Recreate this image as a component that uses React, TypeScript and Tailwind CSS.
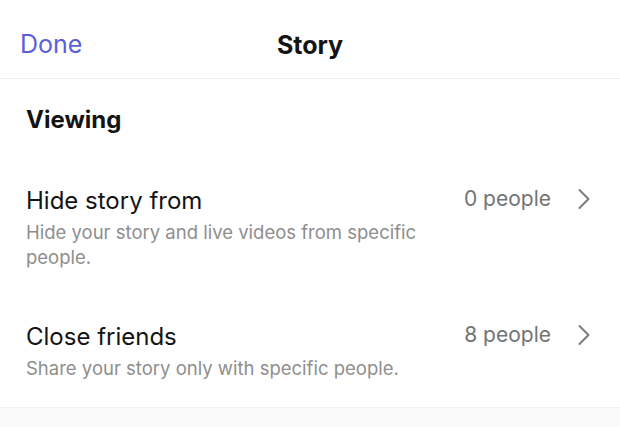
import { ChevronRight } from "lucide-react";

type Row = {
  title: string;
  desc: string;
  count: string;
};

const ROWS: Row[] = [
  {
    title: "Hide story from",
    desc: "Hide your story and live videos from specific people.",
    count: "0 people",
  },
  {
    title: "Close friends",
    desc: "Share your story only with specific people.",
    count: "8 people",
  },
];

function SettingRow({ row }: { row: Row }) {
  return (
    <div className="flex items-start justify-between pl-[26px] pr-[18px]">
      <div className="w-[420px]">
        <div className="text-[24px] leading-[30px] text-[#141414]">{row.title}</div>
        <div className="mt-[4px] text-[18.5px] leading-[25px] text-[#8e8e8e]">{row.desc}</div>
      </div>
      <div className="flex items-center gap-[15px] -mt-[5px]">
        <span className="text-[21px] leading-[30px] text-[#747474]">{row.count}</span>
        <ChevronRight className="w-[36px] h-[36px] text-[#7a7a7a]" strokeWidth={1.3} />
      </div>
    </div>
  );
}

export default function App() {
  return (
    <div
      className="w-[620px] h-[427px] flex flex-col bg-white overflow-hidden"
      style={{ fontFamily: "Inter, 'Liberation Sans', sans-serif" }}
    >
      {/* nav bar */}
      <header className="relative h-[79px] border-b border-[#eeeeee] flex items-center justify-center">
        <button className="absolute left-[20px] top-[29px] text-[25px] leading-[30px] text-[#5a60d8]">
          Done
        </button>
        <div className="text-[25px] leading-[30px] font-bold text-[#141414] mt-[11px]">Story</div>
      </header>

      <div className="pt-[26px] pl-[26px] text-[24px] leading-[30px] font-bold text-[#141414]">
        Viewing
      </div>

      <div className="mt-[51px] flex flex-col gap-[52px]">
        {ROWS.map((r) => (
          <SettingRow key={r.title} row={r} />
        ))}
      </div>

      <div className="mt-[26px] flex-1 border-t border-[#f2f2f2] bg-[#fafafa]" />
    </div>
  );
}
